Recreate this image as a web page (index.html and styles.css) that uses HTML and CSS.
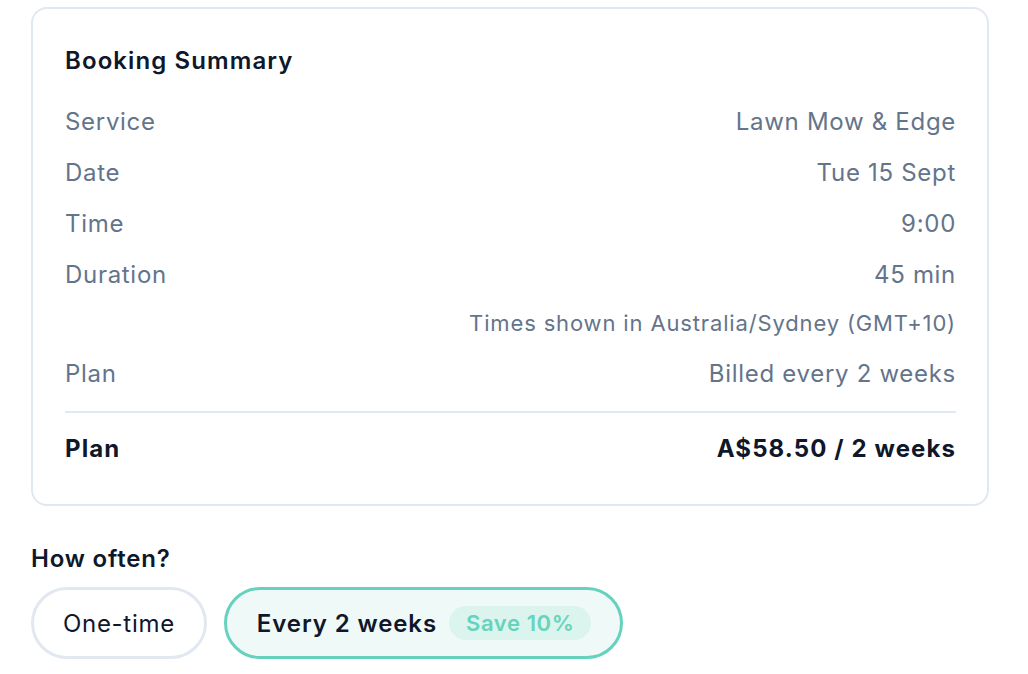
FILE: index.html
```
<html lang="en"><head>
  <meta charset="UTF-8">
  <meta name="viewport" content="width=device-width, initial-scale=1.0">
  <title>Booking Summary</title>
  <link rel="stylesheet" href="styles.css">
</head>
<body>
  <div class="page">
    <div class="summary-card">
      <div class="summary-title">Booking Summary</div>

      <div class="summary-rows">
        <div class="row"><span>Service</span><span>Lawn Mow &amp; Edge</span></div>
        <div class="row"><span>Date</span><span>Tue 15 Sept</span></div>
        <div class="row"><span>Time</span><span>9:00</span></div>
        <div class="row"><span>Duration</span><span>45 min</span></div>
        <div class="tz-note">Times shown in Australia/Sydney (GMT+10)</div>
        <div class="row"><span>Plan</span><span>Billed every 2 weeks</span></div>
      </div>

      <div class="divider"></div>

      <div class="row total"><span>Plan</span><span>A$58.50 / 2 weeks</span></div>
    </div>

    <div class="freq-label">How often?</div>
    <div class="freq-options">
      <button class="freq-btn">One-time</button>
      <button class="freq-btn active">Every 2 weeks <span class="save-badge">Save 10%</span></button>
    </div>
  </div>
</body></html>
```

FILE: styles.css
```
body {
  margin: 0;
  font-family: Inter, "Noto Sans", sans-serif;
  background: #fff;
  color: #0f172a;
}

.page {
  padding: 7px 39px 0 31px;
}

.summary-card {
  border: 2px solid #e2e8f0;
  border-radius: 16px;
  padding: 37px 31px 39px 32px;
}

.summary-title {
  font-size: 24px;
  line-height: 30px;
  font-weight: 600;
  letter-spacing: 1.1px;
  margin-bottom: 30px;
}

.summary-rows {
  display: flex;
  flex-direction: column;
  gap: 19px;
}

.row {
  display: flex;
  justify-content: space-between;
  font-size: 24px;
  line-height: 32px;
  letter-spacing: 0.7px;
  color: #64748b;
}

.tz-note {
  text-align: right;
  font-size: 22px;
  line-height: 28px;
  letter-spacing: 0.85px;
  color: #64748b;
  margin: -1px 0 2px 0;
}

.divider {
  height: 2px;
  background: #e2e8f0;
  margin: 21px 0 20px 0;
}

.row.total {
  color: #0f172a;
  font-weight: 700;
  letter-spacing: 1.1px;
}

.freq-label {
  font-size: 24px;
  line-height: 30px;
  font-weight: 600;
  letter-spacing: 0.8px;
  margin: 38px 0 13px 0;
}

.freq-options {
  display: flex;
  gap: 17px;
}

.freq-btn {
  display: flex;
  align-items: center;
  height: 72px;
  box-sizing: border-box;
  padding: 0 29px;
  border: 3px solid #e2e8f0;
  border-radius: 36px;
  background: #fff;
  font-family: inherit;
  font-size: 24px;
  letter-spacing: 0.7px;
  color: #0f172a;
  cursor: pointer;
}

.freq-btn.active {
  border-color: #66d1bc;
  background: #effaf8;
  font-weight: 600;
  letter-spacing: 0.9px;
  padding: 0 29px 0 30px;
  gap: 12px;
}

.save-badge {
  display: inline-block;
  background: #dcf4ee;
  color: #66d3bc;
  font-size: 22px;
  line-height: 34px;
  letter-spacing: 0.6px;
  padding: 0 17px;
  border-radius: 17px;
  font-weight: 600;
}
```
